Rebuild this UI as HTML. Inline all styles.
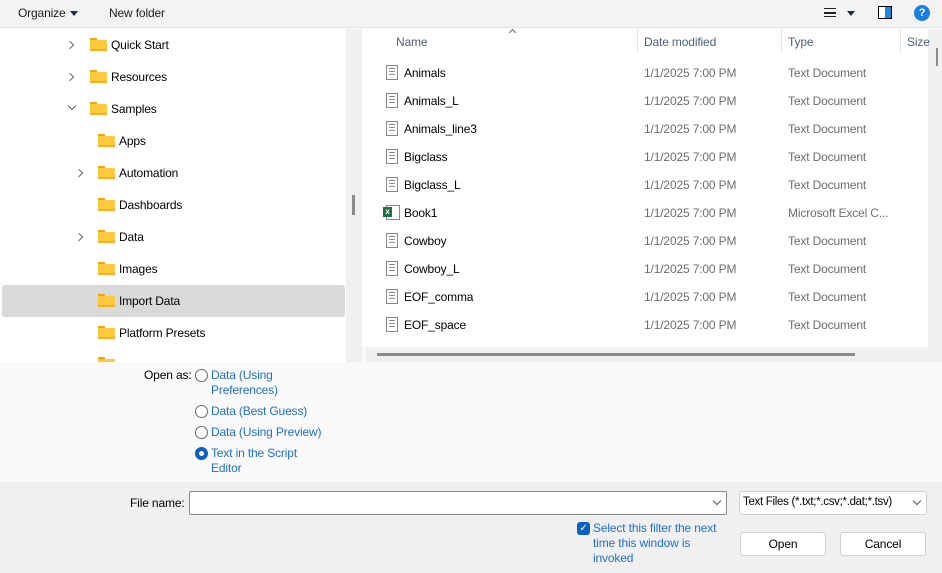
<!DOCTYPE html>
<html><head><style>
*{margin:0;padding:0;box-sizing:border-box}
body{width:942px;height:573px;overflow:hidden;background:#f9f9f9;font-family:"Liberation Sans",sans-serif;font-size:12px;letter-spacing:-0.15px;color:#000;position:relative}
.a{position:absolute;white-space:nowrap}
.fold{position:absolute;width:17px;height:13px}
.fold:before{content:"";position:absolute;left:0;top:0;width:7px;height:4px;background:#e8a600;border-radius:1px 1px 0 0}
.fold:after{content:"";position:absolute;left:0;top:2px;width:17px;height:11px;background:#ffc83d;border-radius:1px;box-shadow:inset 0 -2px 0 #f3b020}
.chev{position:absolute;width:6px;height:6px;border-right:1.3px solid #666;border-bottom:1.3px solid #666}
.doc{position:absolute;width:12px;height:15px;border:1px solid #888;background:#fff;background-image:repeating-linear-gradient(#fff 0 2px,#888 2px 3px);background-clip:content-box;padding:2px 2px}
.dt{color:#6d6d6d}
.lk{color:#1f6fcf}
.rad{position:absolute;width:13px;height:13px;border:1px solid #6a6a6a;border-radius:50%;background:#fff}
</style></head><body>
<div class="a" style="left:0;top:0;width:942px;height:28px;background:#f3f3f3;border-bottom:1px solid #e5e5e5"></div>
<div class="a" style="left:18px;top:6px;color:#1b1b1b">Organize</div>
<div class="a" style="left:70px;top:11px;border:4px solid transparent;border-top:5px solid #1b2a44"></div>
<div class="a" style="left:109px;top:6px;color:#1b1b1b">New folder</div>
<div class="a" style="left:824px;top:8px;width:12px;height:9px;border-top:1.5px solid #222;border-bottom:1.5px solid #222"></div>
<div class="a" style="left:824px;top:12px;width:12px;height:1.5px;background:#222"></div>
<div class="a" style="left:847px;top:11px;border:4px solid transparent;border-top:5px solid #1b2a44"></div>
<div class="a" style="left:878px;top:6px;width:14px;height:13px;border:1.5px solid #000;background:linear-gradient(90deg,#fff 50%,#1a8ae0 50%)"></div>
<div class="a" style="left:914px;top:5px;width:16px;height:16px;border-radius:50%;background:#1a7fe0;color:#fff;font-size:11px;font-weight:bold;text-align:center;line-height:16px">?</div>
<div class="a" style="left:0;top:29px;width:346px;height:333px;background:#fff"></div>
<div class="a" style="left:346px;top:29px;width:16px;height:333px;background:#f0f0f0"></div>
<div class="a" style="left:352px;top:195px;width:3px;height:20px;background:#8a8a8a"></div>
<div class="a" style="left:2px;top:285px;width:343px;height:32px;background:#d9d9d9;border-radius:3px"></div>
<div class="chev" style="left:67px;top:42px;transform:rotate(-45deg)"></div>
<div class="fold" style="left:90px;top:38px"></div><div class="a" style="left:111px;top:38px">Quick Start</div>
<div class="chev" style="left:67px;top:74px;transform:rotate(-45deg)"></div>
<div class="fold" style="left:90px;top:70px"></div><div class="a" style="left:111px;top:70px">Resources</div>
<div class="chev" style="left:69px;top:103px;transform:rotate(45deg)"></div>
<div class="fold" style="left:90px;top:102px"></div><div class="a" style="left:111px;top:102px">Samples</div>
<div class="fold" style="left:98px;top:134px"></div><div class="a" style="left:119px;top:134px">Apps</div>
<div class="chev" style="left:76px;top:170px;transform:rotate(-45deg)"></div>
<div class="fold" style="left:98px;top:166px"></div><div class="a" style="left:119px;top:166px">Automation</div>
<div class="fold" style="left:98px;top:198px"></div><div class="a" style="left:119px;top:198px">Dashboards</div>
<div class="chev" style="left:76px;top:234px;transform:rotate(-45deg)"></div>
<div class="fold" style="left:98px;top:230px"></div><div class="a" style="left:119px;top:230px">Data</div>
<div class="fold" style="left:98px;top:262px"></div><div class="a" style="left:119px;top:262px">Images</div>
<div class="fold" style="left:98px;top:294px"></div><div class="a" style="left:119px;top:294px">Import Data</div>
<div class="fold" style="left:98px;top:326px"></div><div class="a" style="left:119px;top:326px">Platform Presets</div>
<div class="fold" style="left:98px;top:357px;height:5px;overflow:hidden"></div>
<div class="a" style="left:362px;top:29px;width:566px;height:318px;background:#fff"></div>
<div class="a" style="left:928px;top:29px;width:14px;height:333px;background:#f0f0f0"></div>
<div class="a" style="left:936px;top:48px;width:2px;height:18px;background:#8a8a8a"></div>
<div class="a" style="left:366px;top:347px;width:562px;height:15px;background:#f0f0f0"></div>
<div class="a" style="left:377px;top:353px;width:478px;height:3px;background:#8a8a8a"></div>
<div class="a" style="left:510px;top:30px;width:5px;height:5px;border-left:1px solid #666;border-top:1px solid #666;transform:rotate(45deg)"></div>
<div class="a" style="left:396px;top:35px;color:#4c607a">Name</div>
<div class="a" style="left:637px;top:29px;width:1px;height:24px;background:#e5e5e5"></div>
<div class="a" style="left:644px;top:35px;color:#4c607a">Date modified</div>
<div class="a" style="left:781px;top:29px;width:1px;height:24px;background:#e5e5e5"></div>
<div class="a" style="left:788px;top:35px;color:#4c607a">Type</div>
<div class="a" style="left:900px;top:29px;width:1px;height:24px;background:#e5e5e5"></div>
<div class="a" style="left:907px;top:35px;color:#4c607a">Size</div>

<div class="doc" style="left:386px;top:65px"></div><div class="a" style="left:404px;top:66px">Animals</div><div class="a dt" style="left:644px;top:66px">1/1/2025 7:00 PM</div><div class="a dt" style="left:788px;top:66px">Text Document</div>
<div class="doc" style="left:386px;top:93px"></div><div class="a" style="left:404px;top:94px">Animals_L</div><div class="a dt" style="left:644px;top:94px">1/1/2025 7:00 PM</div><div class="a dt" style="left:788px;top:94px">Text Document</div>
<div class="doc" style="left:386px;top:121px"></div><div class="a" style="left:404px;top:122px">Animals_line3</div><div class="a dt" style="left:644px;top:122px">1/1/2025 7:00 PM</div><div class="a dt" style="left:788px;top:122px">Text Document</div>
<div class="doc" style="left:386px;top:149px"></div><div class="a" style="left:404px;top:150px">Bigclass</div><div class="a dt" style="left:644px;top:150px">1/1/2025 7:00 PM</div><div class="a dt" style="left:788px;top:150px">Text Document</div>
<div class="doc" style="left:386px;top:177px"></div><div class="a" style="left:404px;top:178px">Bigclass_L</div><div class="a dt" style="left:644px;top:178px">1/1/2025 7:00 PM</div><div class="a dt" style="left:788px;top:178px">Text Document</div>
<div class="a" style="left:386px;top:205px;width:14px;height:15px;border:1px solid #888;background:#fff"></div><div class="a" style="left:383px;top:207px;width:9px;height:10px;background:#1d7044;color:#fff;font-size:8px;font-weight:bold;text-align:center;line-height:10px">x</div><div class="a" style="left:404px;top:206px">Book1</div><div class="a dt" style="left:644px;top:206px">1/1/2025 7:00 PM</div><div class="a dt" style="left:788px;top:206px">Microsoft Excel C...</div>
<div class="doc" style="left:386px;top:233px"></div><div class="a" style="left:404px;top:234px">Cowboy</div><div class="a dt" style="left:644px;top:234px">1/1/2025 7:00 PM</div><div class="a dt" style="left:788px;top:234px">Text Document</div>
<div class="doc" style="left:386px;top:261px"></div><div class="a" style="left:404px;top:262px">Cowboy_L</div><div class="a dt" style="left:644px;top:262px">1/1/2025 7:00 PM</div><div class="a dt" style="left:788px;top:262px">Text Document</div>
<div class="doc" style="left:386px;top:289px"></div><div class="a" style="left:404px;top:290px">EOF_comma</div><div class="a dt" style="left:644px;top:290px">1/1/2025 7:00 PM</div><div class="a dt" style="left:788px;top:290px">Text Document</div>
<div class="doc" style="left:386px;top:317px"></div><div class="a" style="left:404px;top:318px">EOF_space</div><div class="a dt" style="left:644px;top:318px">1/1/2025 7:00 PM</div><div class="a dt" style="left:788px;top:318px">Text Document</div>
<div class="a" style="left:144px;top:368px">Open as:</div>
<div class="rad" style="left:195px;top:369px"></div><div class="a lk" style="left:211px;top:368px;line-height:15px">Data (Using<br>Preferences)</div>
<div class="rad" style="left:195px;top:405px"></div><div class="a lk" style="left:211px;top:404px">Data (Best Guess)</div>
<div class="rad" style="left:195px;top:426px"></div><div class="a lk" style="left:211px;top:425px">Data (Using Preview)</div>
<div class="rad" style="left:195px;top:447px;border:4px solid #0a5fc0"></div><div class="a lk" style="left:211px;top:446px;line-height:15px">Text in the Script<br>Editor</div>
<div class="a" style="left:0;top:482px;width:942px;height:91px;background:#f0f0f0"></div>
<div class="a" style="left:130px;top:496px">File name:</div>
<div class="a" style="left:189px;top:491px;width:538px;height:24px;background:#fff;border:1px solid #8a8a8a;border-radius:2px"></div>
<div class="a" style="left:714px;top:498px;width:6px;height:6px;border-right:1px solid #555;border-bottom:1px solid #555;transform:rotate(45deg)"></div>
<div class="a" style="left:739px;top:491px;width:188px;height:24px;background:#fff;border:1px solid #d0d0d0;border-radius:3px"></div>
<div class="a" style="left:743px;top:496px;font-size:11.5px;letter-spacing:-0.3px">Text Files (*.txt;*.csv;*.dat;*.tsv)</div>
<div class="a" style="left:914px;top:498px;width:6px;height:6px;border-right:1px solid #555;border-bottom:1px solid #555;transform:rotate(45deg)"></div>
<div class="a" style="left:577px;top:522px;width:13px;height:13px;background:#0a5fc0;border-radius:3px;color:#fff;font-size:10px;text-align:center;line-height:13px">✓</div>
<div class="a lk" style="left:593px;top:521px;line-height:15px">Select this filter the next<br>time this window is<br>invoked</div>
<div class="a" style="left:740px;top:532px;width:86px;height:24px;background:#fff;border:1px solid #d0d0d0;border-radius:3px;text-align:center;line-height:22px">Open</div>
<div class="a" style="left:840px;top:532px;width:86px;height:24px;background:#fff;border:1px solid #d0d0d0;border-radius:3px;text-align:center;line-height:22px">Cancel</div>
</body></html>
